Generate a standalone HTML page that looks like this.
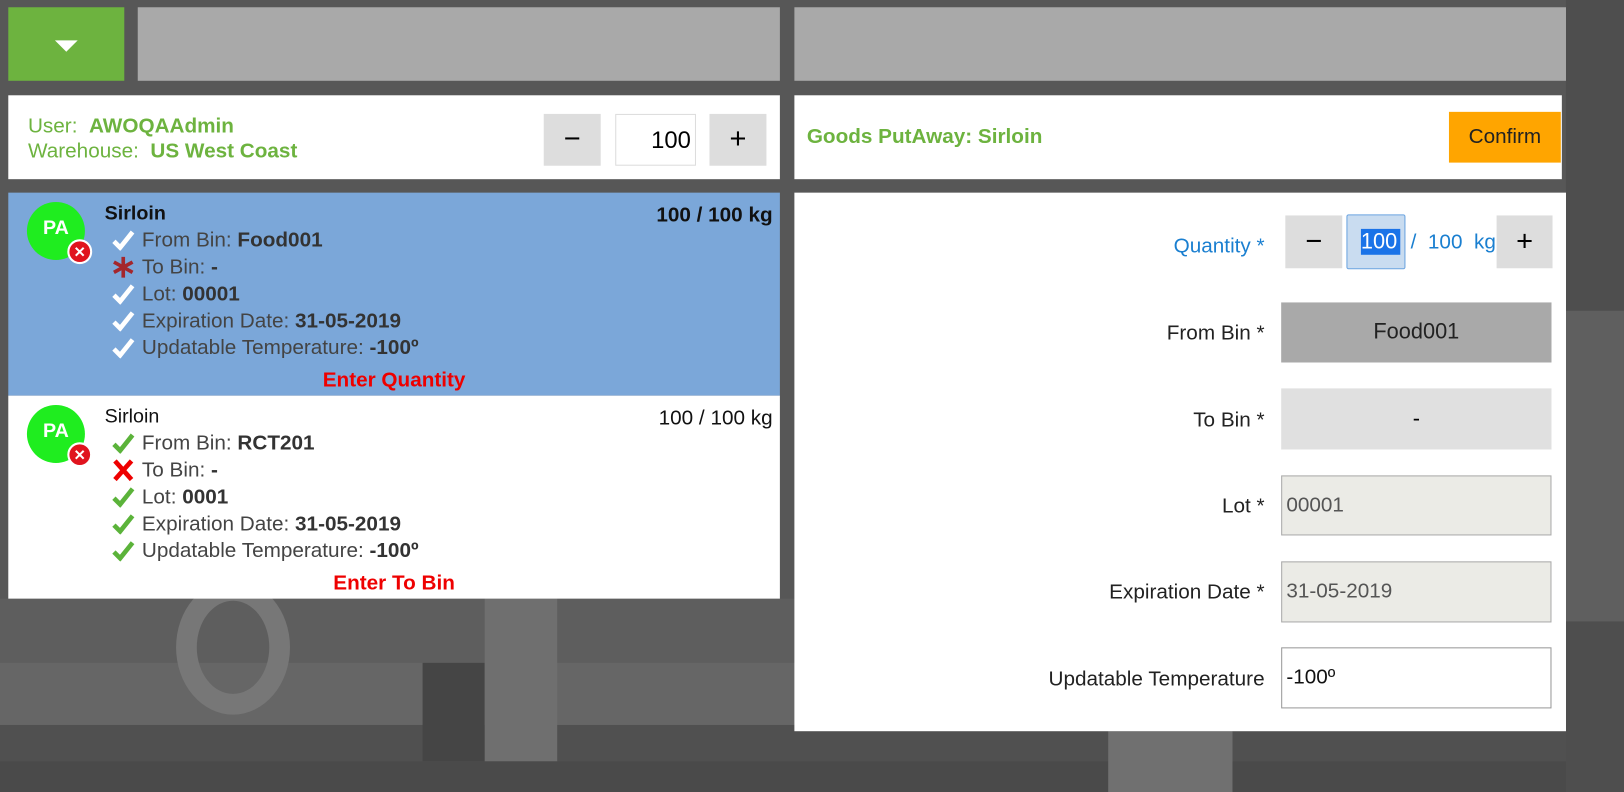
<!DOCTYPE html>
<html><head><meta charset="utf-8"><style>
html,body{margin:0;padding:0;width:1624px;height:792px;overflow:hidden;background:#555;}
#s{position:absolute;left:0;top:0;width:1568px;height:765px;transform:scale(1.03571);transform-origin:0 0;font-family:"Liberation Sans",Arial,sans-serif;}
.a{position:absolute;}
.bg{position:absolute;}
.g{color:#6db33f}
.line{position:absolute;left:108px;font-size:20px;color:#444;height:26px;line-height:26px;white-space:nowrap}
.line b{color:#333}
.ic{display:inline-block;width:29px;vertical-align:top;height:26px;position:relative}
.ic svg{position:absolute;left:0;top:3px}
.lbl{position:absolute;right:347px;font-size:20px;color:#222;text-align:right}
.fld{position:absolute;left:1237px;width:261px;font-size:20px;box-sizing:border-box}
</style></head><body><div id="s">
<div class="bg" style="left:0;top:0;width:1568px;height:765px;background:#575757"></div>
<div class="bg" style="left:0;top:578px;width:1568px;height:187px;background:#5e5e5e"></div>
<div class="bg" style="left:0;top:640px;width:1568px;height:60px;background:#666"></div>
<div class="bg" style="left:0;top:700px;width:1568px;height:35px;background:#505050"></div>
<div class="bg" style="left:0;top:735px;width:1568px;height:30px;background:#4a4a4a"></div>
<div class="bg" style="left:408px;top:640px;width:60px;height:95px;background:#454545"></div>
<div class="bg" style="left:468px;top:578px;width:70px;height:157px;background:#6f6f6f"></div>
<div class="bg" style="left:1070px;top:706px;width:120px;height:59px;background:#707070"></div>
<div class="bg" style="left:1512px;top:0;width:56px;height:765px;background:#4e4e4e"></div>
<div class="bg" style="left:1512px;top:300px;width:56px;height:300px;background:#5f5f5f"></div>
<div class="a" style="left:170px;top:560px;width:110px;height:130px;border:20px solid #777;border-radius:50%;box-sizing:border-box"></div>

<div class="a" style="left:8px;top:7px;width:112px;height:71px;background:#6db33f"></div>
<div class="a" style="left:53px;top:39px;width:0;height:0;border-left:11px solid transparent;border-right:11px solid transparent;border-top:11px solid #fff"></div>
<div class="a" style="left:133px;top:7px;width:620px;height:71px;background:#a9a9a9"></div>
<div class="a" style="left:767px;top:7px;width:745px;height:71px;background:#a9a9a9"></div>

<div class="a" style="left:8px;top:92px;width:745px;height:81px;background:#fff"></div>
<div class="a g" style="left:27px;top:110px;font-size:20px;line-height:24px">User:&nbsp;&nbsp;<b>AWOQAAdmin</b><br>Warehouse:&nbsp;&nbsp;<b>US West Coast</b></div>
<div class="a" style="left:525px;top:110px;width:55px;height:50px;background:#ddd;font-size:28px;text-align:center;line-height:48px">−</div>
<div class="a" style="left:594px;top:110px;width:78px;height:50px;border:1px solid #ddd;box-sizing:border-box;font-size:23px;text-align:right;padding-right:4px;line-height:48px">100</div>
<div class="a" style="left:685px;top:110px;width:55px;height:50px;background:#ddd;font-size:28px;text-align:center;line-height:48px">+</div>

<!-- item 1 -->
<div class="a" style="left:8px;top:186px;width:745px;height:196px;background:#7ba7d9"></div>
<div class="a" style="left:26px;top:195px;width:56px;height:56px;border-radius:50%;background:#1fed1f;color:#fff;font-weight:bold;font-size:19px;text-align:center;line-height:52px">PA</div>
<div class="a" style="left:65px;top:231px;width:24px;height:24px;border-radius:50%;background:#e0141e;border:2px solid #fff;box-sizing:border-box;color:#fff;font-size:14px;font-weight:bold;text-align:center;line-height:20px">✕</div>
<div class="a" style="left:101px;top:196px;font-size:19px;font-weight:bold;color:#111">Sirloin</div>
<div class="a" style="right:822px;top:197px;font-size:20px;font-weight:bold;color:#111">100 / 100 kg</div>
<div class="line" style="top:219px"><span class="ic"><svg width="22" height="20" viewBox="0 0 22 20"><path d="M2 11 L8 17 L20 2" fill="none" stroke="#fff" stroke-width="4.5"/></svg></span>From Bin: <b>Food001</b></div>
<div class="line" style="top:245px"><span class="ic"><svg width="22" height="22" viewBox="0 0 22 22" style="top:2px"><g stroke="#a4262c" stroke-width="3.5"><path d="M11 1 V21"/><path d="M2 6 L20 16"/><path d="M2 16 L20 6"/></g></svg></span>To Bin: <b>-</b></div>
<div class="line" style="top:271px"><span class="ic"><svg width="22" height="20" viewBox="0 0 22 20"><path d="M2 11 L8 17 L20 2" fill="none" stroke="#fff" stroke-width="4.5"/></svg></span>Lot: <b>00001</b></div>
<div class="line" style="top:297px"><span class="ic"><svg width="22" height="20" viewBox="0 0 22 20"><path d="M2 11 L8 17 L20 2" fill="none" stroke="#fff" stroke-width="4.5"/></svg></span>Expiration Date: <b>31-05-2019</b></div>
<div class="line" style="top:323px"><span class="ic"><svg width="22" height="20" viewBox="0 0 22 20"><path d="M2 11 L8 17 L20 2" fill="none" stroke="#fff" stroke-width="4.5"/></svg></span>Updatable Temperature: <b>-100º</b></div>
<div class="a" style="left:8px;width:745px;top:356px;text-align:center;color:#e00;font-weight:bold;font-size:20px">Enter Quantity</div>

<!-- item 2 -->
<div class="a" style="left:8px;top:382px;width:745px;height:196px;background:#fff"></div>
<div class="a" style="left:26px;top:391px;width:56px;height:56px;border-radius:50%;background:#1fed1f;color:#fff;font-weight:bold;font-size:19px;text-align:center;line-height:52px">PA</div>
<div class="a" style="left:65px;top:427px;width:24px;height:24px;border-radius:50%;background:#e0141e;border:2px solid #fff;box-sizing:border-box;color:#fff;font-size:14px;font-weight:bold;text-align:center;line-height:20px">✕</div>
<div class="a" style="left:101px;top:392px;font-size:19px;color:#111">Sirloin</div>
<div class="a" style="right:822px;top:393px;font-size:20px;color:#111">100 / 100 kg</div>
<div class="line" style="top:415px"><span class="ic"><svg width="22" height="20" viewBox="0 0 22 20"><path d="M2 11 L8 17 L20 2" fill="none" stroke="#5bb33a" stroke-width="4.5"/></svg></span>From Bin: <b>RCT201</b></div>
<div class="line" style="top:441px"><span class="ic"><svg width="22" height="22" viewBox="0 0 22 22" style="top:2px"><g stroke="#e00" stroke-width="4.5"><path d="M3 2 L19 20"/><path d="M19 2 L3 20"/></g></svg></span>To Bin: <b>-</b></div>
<div class="line" style="top:467px"><span class="ic"><svg width="22" height="20" viewBox="0 0 22 20"><path d="M2 11 L8 17 L20 2" fill="none" stroke="#5bb33a" stroke-width="4.5"/></svg></span>Lot: <b>0001</b></div>
<div class="line" style="top:493px"><span class="ic"><svg width="22" height="20" viewBox="0 0 22 20"><path d="M2 11 L8 17 L20 2" fill="none" stroke="#5bb33a" stroke-width="4.5"/></svg></span>Expiration Date: <b>31-05-2019</b></div>
<div class="line" style="top:519px"><span class="ic"><svg width="22" height="20" viewBox="0 0 22 20"><path d="M2 11 L8 17 L20 2" fill="none" stroke="#5bb33a" stroke-width="4.5"/></svg></span>Updatable Temperature: <b>-100º</b></div>
<div class="a" style="left:8px;width:745px;top:552px;text-align:center;color:#e00;font-weight:bold;font-size:20px">Enter To Bin</div>

<!-- right header -->
<div class="a" style="left:767px;top:92px;width:741px;height:81px;background:#fff"></div>
<div class="a g" style="left:779px;top:121px;font-size:20px;font-weight:bold">Goods PutAway: Sirloin</div>
<div class="a" style="left:1399px;top:108px;width:108px;height:49px;background:#ffa500;font-size:20px;text-align:center;line-height:49px;color:#222">Confirm</div>

<!-- right panel -->
<div class="a" style="left:767px;top:186px;width:745px;height:520px;background:#fff"></div>
<div class="lbl" style="top:227px;color:#1a7fd0">Quantity *</div>
<div class="a" style="left:1241px;top:208px;width:55px;height:51px;background:#ddd;font-size:28px;text-align:center;line-height:49px">−</div>
<div class="a" style="left:1300px;top:207px;width:57px;height:53px;background:#c9dcf0;border:1px solid #6aa3e0;box-sizing:border-box;border-radius:2px"></div>
<div class="a" style="left:1314px;top:221px;width:38px;height:25px;background:#1a73e8"></div>
<div class="a" style="left:1314px;top:221px;font-size:21px;color:#fff;line-height:25px">100</div>
<div class="a" style="left:1362px;top:223px;font-size:20px;color:#1a7fd0">/&nbsp; 100&nbsp; kg</div>
<div class="a" style="left:1445px;top:208px;width:54px;height:51px;background:#ddd;font-size:28px;text-align:center;line-height:49px">+</div>

<div class="lbl" style="top:311px">From Bin *</div>
<div class="fld" style="top:292px;height:58px;background:#a9a9a9;text-align:center;line-height:58px;font-size:21px;color:#222">Food001</div>
<div class="lbl" style="top:395px">To Bin *</div>
<div class="fld" style="top:375px;height:59px;background:#e0e0e0;text-align:center;line-height:59px;font-size:21px">-</div>
<div class="lbl" style="top:478px">Lot *</div>
<div class="fld" style="top:459px;height:58px;background:#ebebe6;border:1px solid #aaa;line-height:56px;padding-left:4px;color:#555">00001</div>
<div class="lbl" style="top:561px">Expiration Date *</div>
<div class="fld" style="top:542px;height:59px;background:#ebebe6;border:1px solid #aaa;line-height:57px;padding-left:4px;color:#555">31-05-2019</div>
<div class="lbl" style="top:645px">Updatable Temperature</div>
<div class="fld" style="top:625px;height:59px;background:#fff;border:1px solid #999;line-height:57px;padding-left:4px;color:#111">-100º</div>
</div></body></html>
